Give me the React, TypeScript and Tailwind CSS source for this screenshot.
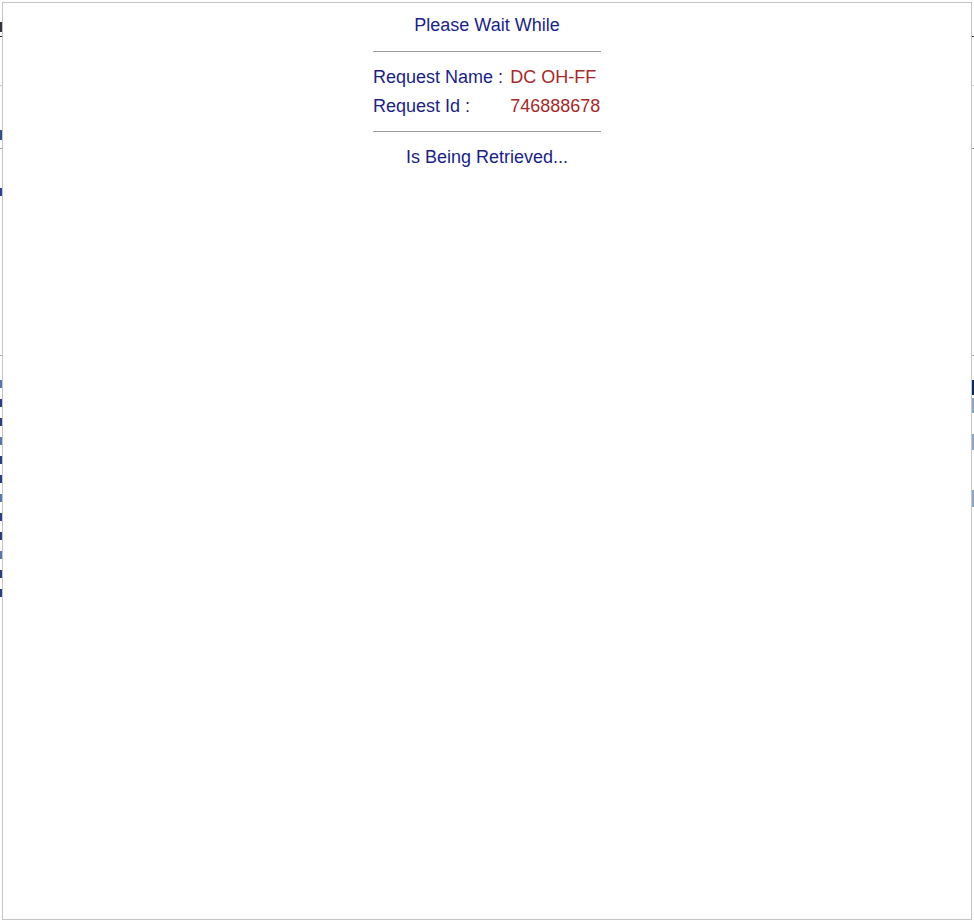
const leftMarks = [0, 1, 2, 3, 4, 5, 6, 7, 8, 9, 10, 11];

export default function App() {
  return (
    <div className="relative h-[922px] w-[974px] overflow-hidden bg-white font-['Liberation_Sans',Arial,sans-serif]">
      {/* page behind the overlay, only its edges show */}
      <div className="flex h-full justify-between">
        <div className="flex w-[2px] flex-col">
          <div className="mt-[22px] h-[10px] bg-[#334]" />
          <div className="mt-[4px] h-px bg-[#222]" />
          <div className="mt-[48px] h-px bg-[#ccc]" />
          <div className="mt-[44px] h-[10px] bg-[#33508a]" />
          <div className="mt-[8px] h-px bg-[#999]" />
          <div className="mt-[39px] h-[8px] bg-[#2a3f9a]" />
          <div className="mt-[159px] h-px bg-[#aaa]" />
          <div className="mt-[24px] flex flex-col gap-[11px]">
            {leftMarks.map((i) => (
              <div key={i} className={`h-[8px] ${i % 3 === 0 ? "bg-[#5577aa]" : "bg-[#2b3f7e]"}`} />
            ))}
          </div>
        </div>
        <div className="flex w-[3px] flex-col">
          <div className="mt-[36px] h-px bg-[#222]" />
          <div className="mt-[48px] h-px bg-[#ccc]" />
          <div className="mt-[62px] h-px bg-[#999]" />
          <div className="mt-[206px] h-px bg-[#aaa]" />
          <div className="mt-[24px] h-[15px] bg-[#0d2a5e]" />
          <div className="mt-[3px] h-[15px] bg-[#8aa6c8]" />
          <div className="mt-[21px] h-[16px] bg-[#8aa6c8]" />
          <div className="mt-[40px] h-[17px] bg-[#8aa6c8]" />
        </div>
      </div>

      {/* overlay */}
      <div className="absolute left-[2px] top-[2px] h-[918px] w-[970px] border border-[#c4c4c4] bg-white">
        <div className="flex flex-col items-center pt-[11px] text-[18px] text-[#1a1f86]">
          <div className="leading-[22px]">Please Wait While</div>
          <div className="mt-[15px] h-px w-[228px] bg-[#9a9a9a]" />
          <table className="mt-[11px] w-[228px] border-collapse">
            <tbody>
              <tr className="h-[29px]">
                <td className="whitespace-nowrap pr-[6px] align-middle">Request Name :</td>
                <td className="whitespace-nowrap align-middle text-[#a52a2a]">DC OH-FF</td>
              </tr>
              <tr className="h-[29px]">
                <td className="whitespace-nowrap pr-[6px] align-middle">Request Id :</td>
                <td className="whitespace-nowrap align-middle text-[#a52a2a]">746888678</td>
              </tr>
            </tbody>
          </table>
          <div className="mt-[10px] h-px w-[228px] bg-[#9a9a9a]" />
          <div className="mt-[14px] leading-[22px]">Is Being Retrieved...</div>
        </div>
      </div>
    </div>
  );
}
